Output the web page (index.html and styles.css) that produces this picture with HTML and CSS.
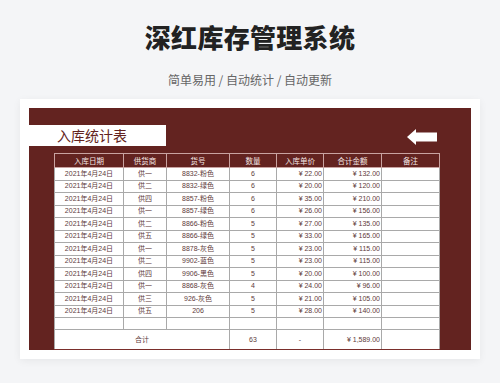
FILE: index.html
```html
<!DOCTYPE html>
<html lang="zh">
<head>
<meta charset="utf-8">
<link rel="stylesheet" href="styles.css">
</head>
<body>
<header class="hero">
  <h1 class="title">深红库存管理系统</h1>
  <p class="subtitle">简单易用 / 自动统计 / 自动更新</p>
</header>
<div class="card">
  <div class="panel">
    <div class="panel-head">
      <div class="sheet-title">入库统计表</div>
      <svg class="arrow" width="30" height="16" viewBox="0 0 30 16"><path d="M0 8 L9 0 L9 3.5 L30 3.5 L30 12.5 L9 12.5 L9 16 Z" fill="#fff"/></svg>
    </div>
    <table class="grid">
      <colgroup>
        <col class="c1"><col class="c2"><col class="c3"><col class="c4"><col class="c5"><col class="c6"><col class="c7">
      </colgroup>
      <thead>
        <tr><th>入库日期</th><th>供货商</th><th>货号</th><th>数量</th><th>入库单价</th><th>合计金额</th><th>备注</th></tr>
      </thead>
      <tbody>
        <tr><td>2021年4月24日</td><td>供一</td><td>8832-粉色</td><td>6</td><td class="num">¥ 22.00</td><td class="num">¥ 132.00</td><td></td></tr>
        <tr><td>2021年4月24日</td><td>供二</td><td>8832-绿色</td><td>6</td><td class="num">¥ 20.00</td><td class="num">¥ 120.00</td><td></td></tr>
        <tr><td>2021年4月24日</td><td>供四</td><td>8857-粉色</td><td>6</td><td class="num">¥ 35.00</td><td class="num">¥ 210.00</td><td></td></tr>
        <tr><td>2021年4月24日</td><td>供一</td><td>8857-绿色</td><td>6</td><td class="num">¥ 26.00</td><td class="num">¥ 156.00</td><td></td></tr>
        <tr><td>2021年4月24日</td><td>供二</td><td>8866-粉色</td><td>5</td><td class="num">¥ 27.00</td><td class="num">¥ 135.00</td><td></td></tr>
        <tr><td>2021年4月24日</td><td>供五</td><td>8866-绿色</td><td>5</td><td class="num">¥ 33.00</td><td class="num">¥ 165.00</td><td></td></tr>
        <tr><td>2021年4月24日</td><td>供一</td><td>8878-灰色</td><td>5</td><td class="num">¥ 23.00</td><td class="num">¥ 115.00</td><td></td></tr>
        <tr><td>2021年4月24日</td><td>供二</td><td>9902-蓝色</td><td>5</td><td class="num">¥ 23.00</td><td class="num">¥ 115.00</td><td></td></tr>
        <tr><td>2021年4月24日</td><td>供四</td><td>9906-黑色</td><td>5</td><td class="num">¥ 20.00</td><td class="num">¥ 100.00</td><td></td></tr>
        <tr><td>2021年4月24日</td><td>供一</td><td>8868-灰色</td><td>4</td><td class="num">¥ 24.00</td><td class="num">¥ 96.00</td><td></td></tr>
        <tr><td>2021年4月24日</td><td>供三</td><td>926-灰色</td><td>5</td><td class="num">¥ 21.00</td><td class="num">¥ 105.00</td><td></td></tr>
        <tr><td>2021年4月24日</td><td>供五</td><td>206</td><td>5</td><td class="num">¥ 28.00</td><td class="num">¥ 140.00</td><td></td></tr>
        <tr class="empty"><td></td><td></td><td></td><td></td><td></td><td></td><td></td></tr>
        <tr class="total"><td colspan="3">合计</td><td>63</td><td>-</td><td class="num">¥ 1,589.00</td><td></td></tr>
      </tbody>
    </table>
  </div>
</div>
</body>
</html>
```

FILE: styles.css
```css
* { box-sizing: border-box; }
html, body { margin: 0; padding: 0; }
body {
  background: #f4f5f7;
  font-family: "Noto Sans CJK SC", "Noto Sans", sans-serif;
  width: 500px;
  height: 383px;
  overflow: hidden;
}
.hero {
  display: flex;
  flex-direction: column;
  align-items: center;
  padding-top: 19px;
}
.title {
  margin: 0;
  font-size: 26px;
  line-height: 36px;
  font-weight: 900;
  color: #222;
  letter-spacing: 0.3px;
}
.subtitle {
  margin: 17px 0 0;
  font-size: 12px;
  line-height: 16px;
  color: #666;
}
.card {
  margin: 11px 20px 0;
  width: 460px;
  height: 260px;
  background: #fff;
  padding: 9px 9px 0;
  box-shadow: 0 2px 8px rgba(0,0,0,0.06);
}
.panel {
  background: #632320;
  height: 242px;
  display: flex;
  flex-direction: column;
}
.panel-head {
  display: flex;
  align-items: center;
  justify-content: space-between;
  margin-top: 17px;
  height: 21px;
  padding-right: 34px;
}
.sheet-title {
  width: 137px;
  height: 21px;
  background: #fff;
  color: #632320;
  font-size: 14px;
  line-height: 21px;
  padding-left: 28px;
}
.arrow { display: block; margin-top: 2px; }
.grid {
  margin: 7px 0 0 25px;
  border-collapse: collapse;
  table-layout: fixed;
  width: 385px;
  font-family: "Liberation Sans", "Noto Sans CJK SC", sans-serif;
  font-size: 7px;
  color: #5e3a3a;
}
.c1 { width: 69px; }
.c2 { width: 43px; }
.c3 { width: 63px; }
.c4 { width: 47px; }
.c5 { width: 47px; }
.c6 { width: 58px; }
.c7 { width: 58px; }
.grid th {
  height: 14px;
  padding: 0;
  font-weight: 400;
  font-size: 7.5px;
  color: #f3e6e5;
  border: 1px solid #c9a3a1;
  text-align: center;
}
.grid td {
  height: 12.5px;
  padding: 0 1px;
  background: #fff;
  border: 1px solid #a9a9a9;
  text-align: center;
  white-space: nowrap;
  line-height: 10px;
}
.grid td.num { text-align: right; }
.grid tr.empty td { height: 12px; }
.grid tr.total td { height: 20px; border-bottom-color: #7a2e2b; }
```
